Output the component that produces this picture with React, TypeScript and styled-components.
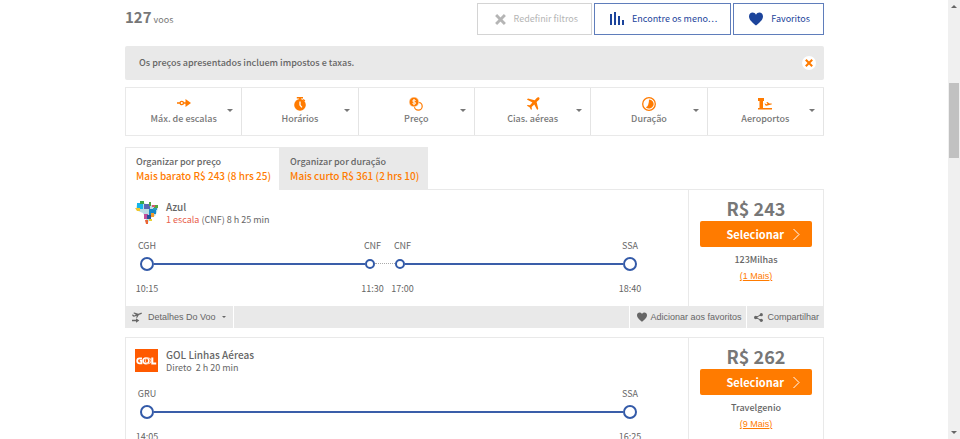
import React from "react";
import styled, { createGlobalStyle, css } from "styled-components";

const GlobalStyle = createGlobalStyle`
  *, *::before, *::after { box-sizing: border-box; }
  body {
    margin: 0;
    overflow: hidden;
    background: #fff;
    color: #666;
    font-family: "Noto Sans CJK SC", "Noto Sans", sans-serif;
    font-size: 9px;
    line-height: 12px;
  }
  button { font: inherit; color: inherit; cursor: pointer; }
  svg { display: block; flex: none; }
`;

const ORANGE = "#ff7b00";
const BLUE = "#1c449b";
const SANS = `"Liberation Sans", Arial, sans-serif`;

const Viewport = styled.div`
  display: flex;
  height: 100vh;
  overflow: hidden;
`;

const Page = styled.main`
  flex: 1;
  min-width: 0;
  max-width: 948px;
  margin: 0 auto;
  padding: 3px 124px 0 125px;
`;

const TopBar = styled.header`
  display: flex;
  justify-content: space-between;
  align-items: flex-start;
  height: 32px;
`;

const Count = styled.h1`
  margin: 0;
  padding-top: 4px;
  font-size: 9px;
  line-height: 20px;
  font-weight: 400;
  color: #777;

  strong { font-size: 15px; font-weight: 700; }
`;

const Actions = styled.div`
  display: flex;
  gap: 2px;
`;

const ActionButton = styled.button`
  display: flex;
  align-items: center;
  gap: 8px;
  height: 32px;
  padding: 0 13px 0 15px;
  border: 1px solid #5f7dbb;
  background: #fff;
  color: ${BLUE};
  white-space: nowrap;

  &:disabled { border-color: #d4d4d4; color: #b5b5b5; cursor: default; padding-left: 17px; }
`;

const Notice = styled.section`
  display: flex;
  justify-content: space-between;
  align-items: center;
  height: 34px;
  margin-top: 11px;
  padding: 0 8px 0 14px;
  border-radius: 2px;
  background: #e9e9e9;
  font-weight: 500;

  p { margin: 0; }
`;

const CloseButton = styled.button`
  display: grid;
  place-items: center;
  width: 14px;
  height: 14px;
  padding: 0;
  border: 0;
  border-radius: 50%;
  background: #fff;
  color: ${ORANGE};
`;

const Filters = styled.nav`
  display: grid;
  grid-template-columns: repeat(6, 1fr);
  height: 49px;
  margin-top: 7px;
  border: solid #e9e9e9;
  border-width: 1px 0 1px 1px;
`;

const FilterButton = styled.button`
  display: grid;
  grid-template-columns: 1fr 14px;
  align-items: center;
  padding: 0 0 2px 14px;
  border: 0;
  border-right: 1px solid #e4e4e4;
  background: #fff;
  color: #777;
  font-weight: 500;
`;

const FilterLabel = styled.span`
  display: flex;
  flex-direction: column;
  align-items: center;
  gap: 2px;
  white-space: nowrap;
`;

const Tabs = styled.div`
  display: flex;
  margin-top: 11px;
`;

const Tab = styled.button<{ $active?: boolean }>`
  height: 42px;
  padding: 0 8px 0 10px;
  border: 1px solid #e9e9e9;
  border-bottom: 0;
  background: ${(p) => (p.$active ? "#fff" : "#e9e9e9")};
  text-align: left;
  font-weight: 500;
  line-height: 14px;
  white-space: nowrap;

  ${(p) =>
    p.$active &&
    css`
      z-index: 1;
      position: relative;
      height: 43px;
      margin-bottom: -1px;
      border-right: 0;
    `}

  strong { display: block; color: ${ORANGE}; font-size: 10px; font-weight: 500; }
`;

const Card = styled.article`
  margin-bottom: 9px;
`;

const CardBody = styled.div`
  display: grid;
  grid-template-columns: 1fr 135px;
  height: 117px;
  border: 1px solid #e9e9e9;
  border-bottom: 0;
`;

const Itinerary = styled.div`
  padding: 11px 0 0 9px;
`;

const Airline = styled.div`
  display: flex;
  gap: 8px;
  height: 26px;

  h2 { margin: 0; font-size: 10px; line-height: 12px; font-weight: 500; color: #666; }
  p { margin: 0; line-height: 13px; }
  em { color: #e8604c; font-style: normal; }
`;

const Timeline = styled.div`
  display: flex;
  padding: 13px 51px 0 5px;
`;

const Stop = styled.div<{ $small?: boolean }>`
  display: flex;
  flex-direction: column;
  align-items: center;
  flex: none;
  width: ${(p) => (p.$small ? 10 : 14)}px;
  white-space: nowrap;
`;

const StopText = styled.span<{ $small?: boolean }>`
  padding-left: ${(p) => (p.$small ? 5 : 0)}px;
`;

const Marker = styled.span<{ $small?: boolean }>`
  width: ${(p) => (p.$small ? 10 : 14)}px;
  height: ${(p) => (p.$small ? 10 : 14)}px;
  margin: ${(p) => (p.$small ? 7 : 5)}px 0 ${(p) => (p.$small ? 14 : 12)}px;
  border: 2px solid #335aa8;
  border-radius: 50%;
`;

const Leg = styled.span<{ $grow: number }>`
  flex: ${(p) => p.$grow} 1 0;
  height: 2px;
  margin-top: 23px;
  background: #3a5ea9;
`;

const Layover = styled.span`
  flex: none;
  width: 20px;
  margin-top: 23px;
  border-top: 1px dotted #aaa;
`;

const Offer = styled.div`
  display: flex;
  flex-direction: column;
  align-items: center;
  padding: 7px 11px 0 11px;
  border-left: 1px solid #e9e9e9;
  font-weight: 500;
`;

const Price = styled.strong`
  color: #777;
  font-size: 18px;
  line-height: 22px;
  font-weight: 700;
`;

const SelectButton = styled.button`
  display: flex;
  align-items: center;
  justify-content: flex-end;
  gap: 9px;
  width: 100%;
  height: 26px;
  margin: 2px 0 7px;
  padding: 0 12px 0 0;
  border: 0;
  border-radius: 2px;
  background: ${ORANGE};
  color: #fff;
  font-size: 11px;
  font-weight: 700;
`;

const MoreLink = styled.a`
  margin-top: 4px;
  color: ${ORANGE};
  font: 9px/12px ${SANS};
  text-decoration: underline;
`;

const CardFooter = styled.footer`
  display: flex;
  gap: 1px;
  height: 22px;
`;

const FooterButton = styled.button<{ $gap: number }>`
  display: flex;
  align-items: center;
  gap: ${(p) => p.$gap}px;
  padding: 0 5px 0 7px;
  border: 0;
  background: #e9e9e9;
  font: 9px/12px ${SANS};
  white-space: nowrap;
`;

const DetailsButton = styled(FooterButton)`
  padding-right: 7px;
`;

const FooterFill = styled.span`
  flex: 1;
  background: #e9e9e9;
`;

const ScrollTrack = styled.aside`
  display: flex;
  flex-direction: column;
  align-items: center;
  width: 12px;
  padding: 5px 1px;
  background: #f0f0f0;
`;

const ScrollThumb = styled.span`
  width: 10px;
  height: 75px;
  margin: 75px 0 auto;
  background: #c1c1c1;
`;

const Cross = ({ size }: { size: number }) => (
  <svg width={size} height={size} viewBox="0 0 10 10" stroke="currentColor" strokeWidth="2.6" aria-hidden>
    <path d="M1 1l8 8M9 1L1 9" />
  </svg>
);

const Bars = () => (
  <svg width="14" height="14" viewBox="0 0 14 14" stroke="currentColor" strokeWidth="2" aria-hidden>
    <path d="M1 2v11M5 0v13M9 4v9M13 8v5" />
  </svg>
);

const Heart = ({ width }: { width: number }) => (
  <svg width={width} height={width} viewBox="0 0 14 14" fill="currentColor" aria-hidden>
    <path d="M7 13.5C4.5 11.300 0 8 0 4.400C0 2 1.700.6 3.600.6C5 .6 6.300 1.300 7 2.700C7.700 1.300 9 .6 10.400.6C12.300.6 14 2 14 4.400C14 8 9.500 11.300 7 13.500z" />
  </svg>
);

const Caret = ({ up, width = 6 }: { up?: boolean; width?: number }) => (
  <svg width={width} height={width / 2} viewBox="0 0 6 3" fill="currentColor" aria-hidden>
    <path d={up ? "M0 3L3 0l3 3z" : "M0 0h6L3 3z"} />
  </svg>
);

const Chevron = () => (
  <svg width="7" height="13" viewBox="0 0 7 13" fill="none" stroke="#fff" aria-hidden>
    <path d="M.5 1l5.500 5.500L.5 12" />
  </svg>
);

const filterIcons: Record<string, React.ReactNode> = {
  stops: (
    <>
      <path d="M0 6h3M6.500 6h3" stroke={ORANGE} strokeWidth="1.600" />
      <circle cx="4.800" cy="6" r="1.700" fill="none" stroke={ORANGE} strokeWidth="1.300" />
      <path d="M8.500 2.100L14 6l-5.500 3.900z" />
    </>
  ),
  times: (
    <>
      <path d="M3.800 0h6.200v1.500h-1.900v1.200h-2.200V1.500H3.800zM10.600 2.100l1.700 1.500-.9 1-1.700-1.500z" />
      <circle cx="7" cy="7.900" r="5.800" />
      <path d="M7 4.500v3.600l1.900 2.200" fill="none" stroke="#fff" strokeWidth="1.300" />
    </>
  ),
  price: (
    <>
      <circle cx="9.300" cy="9.200" r="3.900" fill="none" stroke={ORANGE} strokeWidth="1.200" />
      <circle cx="5" cy="5" r="4.900" stroke="#fff" strokeWidth=".6" />
      <path d="M6.700 3.700C6.100 2.800 3.600 2.700 3.600 4c0 1.300 3.100.7 3.100 2.100 0 1.300-2.600 1.200-3.300.2M5 2v6.200" fill="none" stroke="#fff" strokeWidth=".9" />
    </>
  ),
  airlines: (
    <path d="M13.300.7c-.8-.7-2-.2-2.800.6L8.700 3.200 2 1.500.9 2.600l5.500 2.900-2.500 2.700-2.200-.3-.8.8 2.700 1.500 1.500 2.700.8-.8-.3-2.200 2.700-2.500 2.900 5.500 1.100-1.100-1.700-6.700 1.900-1.800c.8-.8 1.400-1.900.8-2.600z" />
  ),
  duration: (
    <>
      <circle cx="7" cy="7" r="6.300" fill="none" stroke={ORANGE} strokeWidth="1.300" />
      <path d="M7 2.400a4.600 4.600 0 1 1-3.200 7.900Q7 9 7 2.400z" />
    </>
  ),
  airports: (
    <>
      <path d="M0 1h6v3H5v7h9v1.600H0V11h1.500V4H0z" />
      <path d="M6.600 6.200l1.800 1.100 1.100-.3-1.100-1.900h1l2.200 1.500 1.700-.1c1 .1.900.9 0 1.100l-4.800 1.200c-.8.100-1.700-1.200-1.900-2.600z" />
    </>
  ),
};

const FilterIcon = ({ name }: { name: string }) => (
  <svg width="14" height="14" viewBox="0 0 14 14" fill={ORANGE} aria-hidden>
    {filterIcons[name]}
  </svg>
);

const FlightDetailsIcon = () => (
  <svg width="10" height="11" viewBox="0 0 10 11" fill="currentColor" aria-hidden>
    <path d="M0 2.800l1-.2 1.200.8 1.700-.6L1.200.9 2.300.4l4 1.300L9 .7c1.300-.2 1.300.8.3 1.200L6.800 3 5.200 5.700l-1 .4.500-2.300-2.700 1c-.7.200-1.600-.8-2-2z" />
    <path d="M0 7.700h4V6.200L7.300 8.400 4 10.700V9.200H0z" />
  </svg>
);

const ShareIcon = () => (
  <svg width="9" height="9" viewBox="0 0 9 9" fill="currentColor" aria-hidden>
    <path d="M7.300 1.700L1.700 4.500l5.600 2.800" fill="none" stroke="currentColor" />
    <circle cx="7.300" cy="1.700" r="1.600" />
    <circle cx="1.700" cy="4.500" r="1.700" />
    <circle cx="7.300" cy="7.300" r="1.600" />
  </svg>
);

const AzulLogo = () => (
  <svg width="23" height="23" viewBox="0 0 23 23" role="img" aria-label="Azul">
    <path d="M2 3h6l2-1 1 2 8 0 4 2-1 5-2 4-5 2-2 5-3-1 1-3-3-6-5-2-2-2z" fill="#b9dce5" />
    <path d="M2 2h6v6H2z" fill="#15b5e9" />
    <path d="M5 0h4v3H5z" fill="#3fa648" />
    <path d="M9 3h6v5H9z" fill="#5a67b1" />
    <path d="M14 1l2 0v4h-2zM19 4h4v3h-4z" fill="#55a63f" />
    <path d="M0 7h5v3H2z" fill="#eec72f" />
    <path d="M17 4h3v2h-3z" fill="#d95770" />
    <path d="M14 8h7v5h-3l-1 2h-3z" fill="#1688c8" />
    <path d="M9 13h4v5H9z" fill="#c14e9b" />
    <path d="M12 14h4v4h-4z" fill="#265298" />
    <path d="M16 12h3v4h-3z" fill="#f19a2b" />
    <path d="M14 18h3v2h-3z" fill="#e9d232" />
    <path d="M10 19h3v4h-2z" fill="#ec6434" />
    <path d="M18 7h4v2h-4z" fill="#2c9bbf" />
  </svg>
);

const GolLogo = () => (
  <svg width="23" height="23" viewBox="0 0 23 23" fill="none" stroke="#fff" role="img" aria-label="GOL">
    <path d="M0 0h23v23H0z" fill="#ff5a00" stroke="none" />
    <path d="M7 9.300H4.500Q2.200 9.300 2.200 11.800t2.300 2.500h2v-2.600H4.800" strokeWidth="1.800" />
    <circle cx="11" cy="11.800" r="2.900" strokeWidth="1.500" />
    <circle cx="13.200" cy="11.800" r="2.900" strokeWidth="1" stroke="#ffd9c0" />
    <path d="M17.300 8.500v6h3.900" strokeWidth="2" />
  </svg>
);

const filters = [
  ["stops", "Máx. de escalas"],
  ["times", "Horários"],
  ["price", "Preço"],
  ["airlines", "Cias. aéreas"],
  ["duration", "Duração"],
  ["airports", "Aeroportos"],
];

type FlightProps = {
  logo: React.ReactNode;
  airline: string;
  summary: React.ReactNode;
  timeline: React.ReactNode;
  price: string;
  agency: string;
  more: string;
};

const Point = ({ code, time, small }: { code: string; time: string; small?: boolean }) => (
  <Stop $small={small}>
    <StopText $small={small}>{code}</StopText>
    <Marker $small={small} />
    <StopText as="time" $small={small}>
      {time}
    </StopText>
  </Stop>
);

const Flight = ({ logo, airline, summary, timeline, price, agency, more }: FlightProps) => (
  <Card>
    <CardBody>
      <Itinerary>
        <Airline>
          {logo}
          <div>
            <h2>{airline}</h2>
            <p>{summary}</p>
          </div>
        </Airline>
        <Timeline>{timeline}</Timeline>
      </Itinerary>
      <Offer>
        <Price>{price}</Price>
        <SelectButton type="button">
          Selecionar
          <Chevron />
        </SelectButton>
        <span>{agency}</span>
        <MoreLink href="#ofertas">{more}</MoreLink>
      </Offer>
    </CardBody>
    <CardFooter>
      <DetailsButton type="button" $gap={6}>
        <FlightDetailsIcon />
        Detalhes Do Voo
        <Caret width={4} />
      </DetailsButton>
      <FooterFill />
      <FooterButton type="button" $gap={3}>
        <Heart width={10} />
        Adicionar aos favoritos
      </FooterButton>
      <FooterButton type="button" $gap={4}>
        <ShareIcon />
        Compartilhar
      </FooterButton>
    </CardFooter>
  </Card>
);

export default function App() {
  return (
    <>
      <GlobalStyle />
      <Viewport>
        <Page>
          <TopBar>
            <Count>
              <strong>127</strong> voos
            </Count>
            <Actions>
              <ActionButton type="button" disabled>
                <Cross size={11} />
                Redefinir filtros
              </ActionButton>
              <ActionButton type="button">
                <Bars />
                Encontre os meno…
              </ActionButton>
              <ActionButton type="button">
                <Heart width={14} />
                Favoritos
              </ActionButton>
            </Actions>
          </TopBar>
          <Notice>
            <p>Os preços apresentados incluem impostos e taxas.</p>
            <CloseButton type="button" aria-label="Fechar">
              <Cross size={8} />
            </CloseButton>
          </Notice>
          <Filters>
            {filters.map(([icon, label]) => (
              <FilterButton type="button" key={icon}>
                <FilterLabel>
                  <FilterIcon name={icon} />
                  {label}
                </FilterLabel>
                <Caret />
              </FilterButton>
            ))}
          </Filters>
          <Tabs role="tablist">
            <Tab type="button" role="tab" aria-selected $active>
              Organizar por preço
              <strong>Mais barato R$ 243 (8 hrs 25)</strong>
            </Tab>
            <Tab type="button" role="tab" aria-selected={false}>
              Organizar por duração
              <strong>Mais curto R$ 361 (2 hrs 10)</strong>
            </Tab>
          </Tabs>
          <Flight
            logo={<AzulLogo />}
            airline="Azul"
            summary={
              <>
                <em>1 escala</em> (CNF) 8 h 25 min
              </>
            }
            timeline={
              <>
                <Point code="CGH" time="10:15" />
                <Leg $grow={210} />
                <Point code="CNF" time="11:30" small />
                <Layover />
                <Point code="CNF" time="17:00" small />
                <Leg $grow={217} />
                <Point code="SSA" time="18:40" />
              </>
            }
            price="R$ 243"
            agency="123Milhas"
            more="(1 Mais)"
          />
          <Flight
            logo={<GolLogo />}
            airline="GOL Linhas Aéreas"
            summary={<>Direto&nbsp; 2 h 20 min</>}
            timeline={
              <>
                <Point code="GRU" time="14:05" />
                <Leg $grow={1} />
                <Point code="SSA" time="16:25" />
              </>
            }
            price="R$ 262"
            agency="Travelgenio"
            more="(9 Mais)"
          />
        </Page>
        <ScrollTrack aria-hidden>
          <Caret up />
          <ScrollThumb />
          <Caret />
        </ScrollTrack>
      </Viewport>
    </>
  );
}
